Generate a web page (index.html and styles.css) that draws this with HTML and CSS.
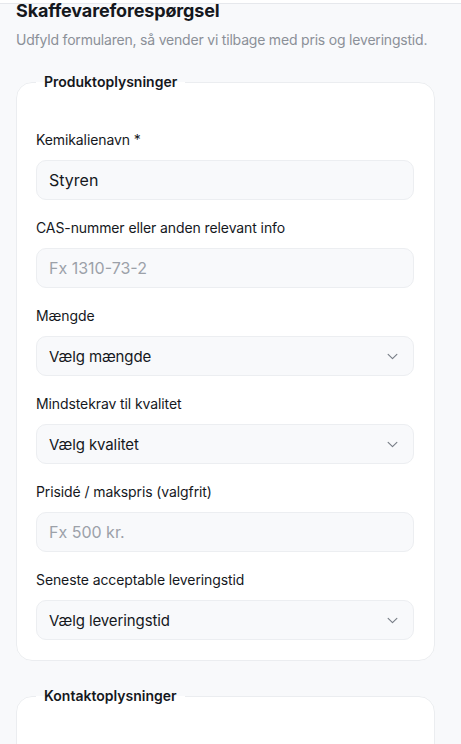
FILE: index.html
```html
<!DOCTYPE html>
<html lang="da">
<head>
  <meta charset="utf-8">
  <link rel="stylesheet" href="styles.css">
</head>
<body>
  <div class="topbar"></div>
  <main class="page">
    <h1 class="title">Skaffevareforespørgsel</h1>
    <p class="subtitle">Udfyld formularen, så vender vi tilbage med pris og leveringstid.</p>

    <form class="request-form">
      <!-- Produkt -->
      <fieldset class="group">
        <legend>Produktoplysninger</legend>

        <div class="field">
          <label for="chemName">Kemikalienavn *</label>
          <input type="text" id="chemName" value="Styren">
        </div>

        <div class="field">
          <label for="casInfo">CAS-nummer eller anden relevant info</label>
          <input type="text" id="casInfo" placeholder="Fx 1310-73-2">
        </div>

        <div class="field">
          <label for="amount">Mængde</label>
          <div class="select-wrap">
            <select id="amount">
              <option>Vælg mængde</option>
            </select>
            <svg class="chevron" viewBox="0 0 12 8" width="11" height="7"><path d="M1 1.5l5 5 5-5" fill="none" stroke="currentColor" stroke-width="1.3" stroke-linecap="round" stroke-linejoin="round"/></svg>
          </div>
        </div>

        <div class="field">
          <label for="quality">Mindstekrav til kvalitet</label>
          <div class="select-wrap">
            <select id="quality">
              <option>Vælg kvalitet</option>
            </select>
            <svg class="chevron" viewBox="0 0 12 8" width="11" height="7"><path d="M1 1.5l5 5 5-5" fill="none" stroke="currentColor" stroke-width="1.3" stroke-linecap="round" stroke-linejoin="round"/></svg>
          </div>
        </div>

        <div class="field">
          <label for="price">Prisidé / makspris (valgfrit)</label>
          <input type="text" id="price" placeholder="Fx 500 kr.">
        </div>

        <div class="field">
          <label for="delivery">Seneste acceptable leveringstid</label>
          <div class="select-wrap">
            <select id="delivery">
              <option>Vælg leveringstid</option>
            </select>
            <svg class="chevron" viewBox="0 0 12 8" width="11" height="7"><path d="M1 1.5l5 5 5-5" fill="none" stroke="currentColor" stroke-width="1.3" stroke-linecap="round" stroke-linejoin="round"/></svg>
          </div>
        </div>
      </fieldset>

      <!-- Kontakt -->
      <fieldset class="group contact">
        <legend>Kontaktoplysninger</legend>

        <div class="field">
          <label for="contactName">Navn *</label>
          <input type="text" id="contactName">
        </div>
      </fieldset>
    </form>
  </main>
</body>
</html>
```

FILE: styles.css
```css
  * {
    box-sizing: border-box;
  }

  body {
    margin: 0;
    background: #f8f9fb;
    font-family: 'Inter', 'Liberation Sans', sans-serif;
    color: #15181d;
  }

  .topbar {
    height: 4px;
    background: #fff;
    border-bottom: 1px solid #e6e8ec;
  }

  .page {
    padding: 0 26px 0 16px;
  }

  .title {
    margin: 0;
    font-size: 18px;
    line-height: 14px;
    font-weight: 700;
    letter-spacing: -0.15px;
  }

  .subtitle {
    margin: 12px -10px 0 0;
    font-size: 14px;
    line-height: 20px;
    letter-spacing: -0.2px;
    white-space: nowrap;
    color: #8b9098;
  }

  .request-form {
    margin-top: 22px;
  }

  .group {
    margin: 0 0 25px;
    min-width: 0;
    background: #fff;
    border: 1px solid #ebedf0;
    border-radius: 16px;
    padding: 38px 20px 20px 19px;
  }

  .group.contact {
    padding-top: 64px;
  }

  .group legend {
    padding: 0 8px;
    margin-left: 0;
    font-size: 14px;
    line-height: 20px;
    font-weight: 600;
  }

  .field {
    display: flex;
    flex-direction: column;
    margin-bottom: 18px;
  }

  .field:last-child {
    margin-bottom: 0;
  }

  .field label {
    font-size: 14px;
    line-height: 20px;
    font-weight: 400;
    letter-spacing: -0.1px;
    margin-bottom: 10px;
  }

  .field input,
  .field select {
    width: 100%;
    height: 40px;
    border: 1px solid #eceef1;
    border-radius: 10px;
    background: #f8f9fb;
    padding: 0 12px;
    font-family: inherit;
    font-size: 16px;
    color: #15181d;
    outline: none;
  }

  .field input::placeholder {
    color: #9ca1a9;
  }

  .select-wrap {
    position: relative;
  }

  .field select {
    appearance: none;
    -webkit-appearance: none;
    font-size: 15px;
    font-weight: 400;
    letter-spacing: -0.1px;
  }

  .chevron {
    position: absolute;
    right: 16px;
    top: 17px;
    color: #777d86;
    pointer-events: none;
  }
```
